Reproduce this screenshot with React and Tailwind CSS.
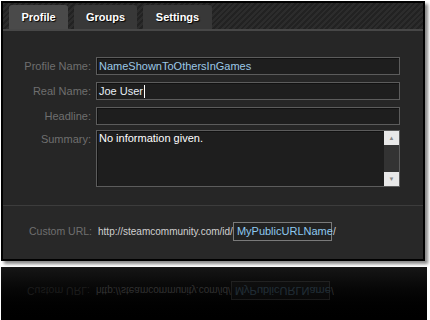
import React from 'react'

const font = { fontFamily: '"Liberation Sans", Arial, sans-serif' }

function Tab({ label, active, w }) {
  return (
    <div
      className={`flex h-[24px] items-center justify-center rounded-t-[3px] text-[11px] font-bold text-white [text-shadow:1px_1px_1px_#000] ${active ? 'bg-[#4a4a4a]' : 'bg-[#383838]'}`}
      style={{ width: w }}
    >
      {label}
    </div>
  )
}

function Row({ label, children, className = '' }) {
  return (
    <div className={`flex items-start ${className}`}>
      <div className="h-[18px] w-[93px] pr-[5px] text-right text-[11px] leading-[18px] text-[#6f6f6f]">{label}</div>
      {children}
    </div>
  )
}

function Field({ value, color = 'text-[#9cc8e6]', caret }) {
  return (
    <div className="flex h-[18px] w-[304px] items-center border border-[#5c5c5c] bg-[#1e1e1e] px-[2px] text-[11px] shadow-[inset_1px_1px_0_#111]">
      <span className={color}>{value}</span>
      {caret && <span className="ml-[1px] h-[13px] w-[1px] bg-white" />}
    </div>
  )
}

function UrlRow({ faded }) {
  return (
    <div className={`flex items-center pl-[26px] ${faded ? 'opacity-20' : ''}`}>
      <span className="text-[10.5px] text-[#6f6f6f]">Custom URL:</span>
      <span className="ml-[6px] text-[10px] text-[#d0d0d0]">http://steamcommunity.com/id/</span>
      <span className="flex h-[19px] w-[99px] shrink-0 items-center border border-[#7a7a7a] bg-[#222] px-[3px] text-[11px] text-[#8ec9ef]">MyPublicURLName</span>
      <span className="ml-[1px] text-[10px] text-[#d0d0d0]">/</span>
    </div>
  )
}

export default function App() {
  return (
    <div className="relative h-[320px] w-[430px] overflow-hidden bg-white" style={font}>
      <div className="ml-[1px] mt-[1px] w-[424px] bg-black p-[2px] shadow-[3px_3px_3px_#8a8a8a]">
        <div className="flex h-[256px] flex-col bg-[#262626]">
          <div className="flex h-[26px] items-end gap-[6px] bg-[repeating-linear-gradient(135deg,#2c2c2c_0px,#2c2c2c_2px,#222_2px,#222_4px)] pl-[6px]">
            <Tab label="Profile" active w={59} />
            <Tab label="Groups" w={63} />
            <Tab label="Settings" w={69} />
          </div>
          <div className="h-[2px] bg-[#474747]" />
          <div className="flex flex-col gap-[7px] pt-[26px]">
            <Row label="Profile Name:">
              <Field value="NameShownToOthersInGames" />
            </Row>
            <Row label="Real Name:">
              <Field value="Joe User" color="text-[#e6eef5]" caret />
            </Row>
            <Row label="Headline:">
              <Field value="" />
            </Row>
            <Row label="Summary:" className="-mt-[2px]">
              <div className="flex h-[57px] w-[304px] border border-[#5c5c5c] bg-[#1e1e1e] shadow-[inset_1px_1px_0_#111]">
                <div className="flex-1 px-[2px] text-[11px] leading-[14px] text-white">No information given.</div>
                <div className="flex w-[15px] flex-col">
                  <div className="flex h-[14px] items-center justify-center bg-[#e8e8e8] text-[6px] text-[#888]">▲</div>
                  <div className="flex-1 bg-[#333]" />
                  <div className="flex h-[14px] items-center justify-center bg-[#e8e8e8] text-[6px] text-[#888]">▼</div>
                </div>
              </div>
            </Row>
          </div>
          <div className="mt-[18px] h-[1px] bg-[#3c3c3c]" />
          <div className="flex flex-1 items-center bg-[#282828] pb-[2px]">
            <UrlRow />
          </div>
        </div>
      </div>
      <div className="ml-[1px] mt-[6px] flex h-[60px] w-[426px] items-start bg-gradient-to-b from-[#161616] to-black pt-[14px]">
        <div className="-scale-y-100">
          <UrlRow faded />
        </div>
      </div>
    </div>
  )
}
